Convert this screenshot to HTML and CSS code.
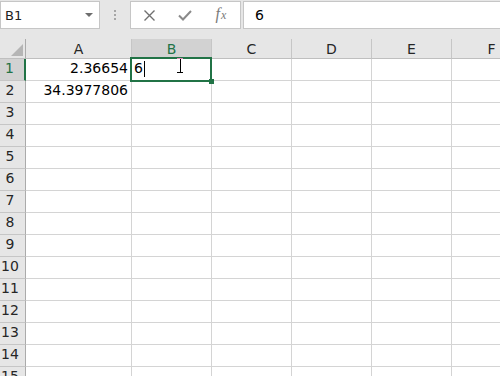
FILE: index.html
```html
<!DOCTYPE html>
<html lang="en">
<head>
  <meta charset="UTF-8">
  <meta name="viewport" content="width=device-width, initial-scale=1.0">
  <title>Sheet</title>
  <link rel="stylesheet" href="styles.css">
</head>
<body>
  <div class="toolbar">
    <div class="name-box"><span>B1</span><span class="drop"></span></div>
    <div class="grip"><i></i><i></i><i></i></div>
    <div class="fx-buttons">
      <span class="fx-btn">
        <svg width="11" height="11" viewBox="0 0 11 11"><path d="M0.5 0.5L10.5 10.5M10.5 0.5L0.5 10.5" stroke="#707070" stroke-width="1.4" fill="none"/></svg>
      </span>
      <span class="fx-btn">
        <svg width="14" height="11" viewBox="0 0 14 11"><path d="M1 5.5L5 9.5L13 1" stroke="#8a8a8a" stroke-width="2" fill="none"/></svg>
      </span>
      <span class="fx-btn fx-label"><i>f</i><i class="small">x</i></span>
    </div>
    <div class="formula">6</div>
  </div>

  <div class="sheet">
    <div class="row head">
      <div class="rh corner"><span class="tri"></span></div>
      <div class="ch col-a">A</div>
      <div class="ch sel">B</div>
      <div class="ch">C</div>
      <div class="ch">D</div>
      <div class="ch">E</div>
      <div class="ch">F</div>
    </div>
    <div class="row">
      <div class="rh sel">1</div>
      <div class="c col-a num">2.36654</div>
      <div class="c">6<span class="caret"></span></div>
      <div class="c"></div><div class="c"></div><div class="c"></div><div class="c"></div>
    </div>
    <div class="row">
      <div class="rh">2</div>
      <div class="c col-a num">34.3977806</div>
      <div class="c"></div><div class="c"></div><div class="c"></div><div class="c"></div><div class="c"></div>
    </div>
    <div class="row">
      <div class="rh">3</div>
      <div class="c col-a"></div>
      <div class="c"></div><div class="c"></div><div class="c"></div><div class="c"></div><div class="c"></div>
    </div>
    <div class="row">
      <div class="rh">4</div>
      <div class="c col-a"></div>
      <div class="c"></div><div class="c"></div><div class="c"></div><div class="c"></div><div class="c"></div>
    </div>
    <div class="row">
      <div class="rh">5</div>
      <div class="c col-a"></div>
      <div class="c"></div><div class="c"></div><div class="c"></div><div class="c"></div><div class="c"></div>
    </div>
    <div class="row">
      <div class="rh">6</div>
      <div class="c col-a"></div>
      <div class="c"></div><div class="c"></div><div class="c"></div><div class="c"></div><div class="c"></div>
    </div>
    <div class="row">
      <div class="rh">7</div>
      <div class="c col-a"></div>
      <div class="c"></div><div class="c"></div><div class="c"></div><div class="c"></div><div class="c"></div>
    </div>
    <div class="row">
      <div class="rh">8</div>
      <div class="c col-a"></div>
      <div class="c"></div><div class="c"></div><div class="c"></div><div class="c"></div><div class="c"></div>
    </div>
    <div class="row">
      <div class="rh">9</div>
      <div class="c col-a"></div>
      <div class="c"></div><div class="c"></div><div class="c"></div><div class="c"></div><div class="c"></div>
    </div>
    <div class="row">
      <div class="rh">10</div>
      <div class="c col-a"></div>
      <div class="c"></div><div class="c"></div><div class="c"></div><div class="c"></div><div class="c"></div>
    </div>
    <div class="row">
      <div class="rh">11</div>
      <div class="c col-a"></div>
      <div class="c"></div><div class="c"></div><div class="c"></div><div class="c"></div><div class="c"></div>
    </div>
    <div class="row">
      <div class="rh">12</div>
      <div class="c col-a"></div>
      <div class="c"></div><div class="c"></div><div class="c"></div><div class="c"></div><div class="c"></div>
    </div>
    <div class="row">
      <div class="rh">13</div>
      <div class="c col-a"></div>
      <div class="c"></div><div class="c"></div><div class="c"></div><div class="c"></div><div class="c"></div>
    </div>
    <div class="row">
      <div class="rh">14</div>
      <div class="c col-a"></div>
      <div class="c"></div><div class="c"></div><div class="c"></div><div class="c"></div><div class="c"></div>
    </div>
    <div class="row">
      <div class="rh">15</div>
      <div class="c col-a"></div>
      <div class="c"></div><div class="c"></div><div class="c"></div><div class="c"></div><div class="c"></div>
    </div>

    <!-- active cell outline, fill handle and mouse cursor -->
    <div class="selection"></div>
    <div class="handle"></div>
    <svg class="ibeam" width="8" height="18" viewBox="0 0 8 18">
      <path d="M1 1.5h6" stroke="#de8cb9" stroke-width="1"/>
      <path d="M4.5 2v13" stroke="#000" stroke-width="1"/>
      <path d="M1 15.5h6" stroke="#000" stroke-width="1"/>
    </svg>
  </div>
</body>
</html>
```

FILE: styles.css
```css
* {
  box-sizing: border-box;
  margin: 0;
  padding: 0;
}

body {
  width: 500px;
  height: 376px;
  overflow: hidden;
  background: #e6e6e6;
  font-family: 'DejaVu Sans', sans-serif;
  font-size: 14px;
  color: #000;
}

/* formula bar */
.toolbar {
  display: flex;
  align-items: flex-start;
  height: 39px;
  padding-top: 1px;
  background: #e6e6e6;
}

.name-box {
  width: 100px;
  height: 28px;
  display: flex;
  align-items: center;
  justify-content: space-between;
  padding: 0 6px 0 4px;
  background: #fff;
  border: 1px solid #c6c6c6;
  font-size: 13px;
  color: #222;
}

.drop {
  border-left: 4px solid transparent;
  border-right: 4px solid transparent;
  border-top: 4px solid #6d6d6d;
}

.grip {
  width: 30px;
  display: flex;
  flex-direction: column;
  align-items: center;
  gap: 2px;
  padding-top: 9px;
}

.grip i {
  width: 2px;
  height: 2px;
  background: #a6a6a6;
}

.fx-buttons {
  width: 111px;
  height: 28px;
  display: flex;
  background: #fff;
  border: 1px solid #c6c6c6;
}

.fx-btn {
  width: 36px;
  display: flex;
  align-items: center;
  justify-content: center;
}

.fx-label {
  font-family: 'Liberation Serif', serif;
  font-size: 16px;
  color: #7a7a7a;
  align-items: baseline;
  padding-top: 3px;
}

.fx-label .small {
  font-size: 12px;
  margin-left: 1px;
}

.formula {
  flex: 1;
  height: 28px;
  margin-left: 2px;
  padding-left: 11px;
  background: #fff;
  border: 1px solid #c6c6c6;
  border-right: none;
  line-height: 26px;
}

/* grid */
.sheet {
  position: relative;
  background: #fff;
}

.row {
  display: flex;
  height: 22px;
}

.row.head {
  height: 20px;
  background: #e6e6e6;
}

.rh {
  width: 26px;
  flex: none;
  padding-right: 5px;
  background: #e6e6e6;
  border-right: 1px solid #ababab;
  border-bottom: 1px solid #c6c6c6;
  text-align: center;
  line-height: 18px;
  color: #262626;
}

.rh.sel {
  background: #d2d2d2;
  color: #217346;
  border-right: 2px solid #217346;
}

.corner {
  display: flex;
  justify-content: flex-end;
  align-items: flex-end;
  padding: 0 2px 2px 0;
  border-bottom-color: #bfbfbf;
}

.tri {
  border-left: 12px solid transparent;
  border-bottom: 12px solid #b5b5b5;
}

.ch {
  width: 80px;
  flex: none;
  padding-top: 2px;
  border-right: 1px solid #c6c6c6;
  border-bottom: 1px solid #bfbfbf;
  text-align: center;
  line-height: 17px;
  color: #262626;
}

.ch.sel {
  background: #d2d2d2;
  color: #217346;
}

.c {
  width: 80px;
  flex: none;
  padding: 0 3px 0 2px;
  border-right: 1px solid #d4d4d4;
  border-bottom: 1px solid #d4d4d4;
  line-height: 18px;
  white-space: nowrap;
  overflow: hidden;
}

.col-a {
  width: 106px;
}

.num {
  text-align: right;
}

.caret {
  display: inline-block;
  width: 1px;
  height: 16px;
  margin-left: 1px;
  background: #000;
  vertical-align: -4px;
}

.selection {
  position: absolute;
  left: 130px;
  top: 18px;
  width: 82px;
  height: 25px;
  border: 2px solid #217346;
  pointer-events: none;
}

.handle {
  position: absolute;
  left: 209px;
  top: 40px;
  width: 5px;
  height: 5px;
  background: #217346;
}

.ibeam {
  position: absolute;
  left: 176px;
  top: 18px;
}
```
